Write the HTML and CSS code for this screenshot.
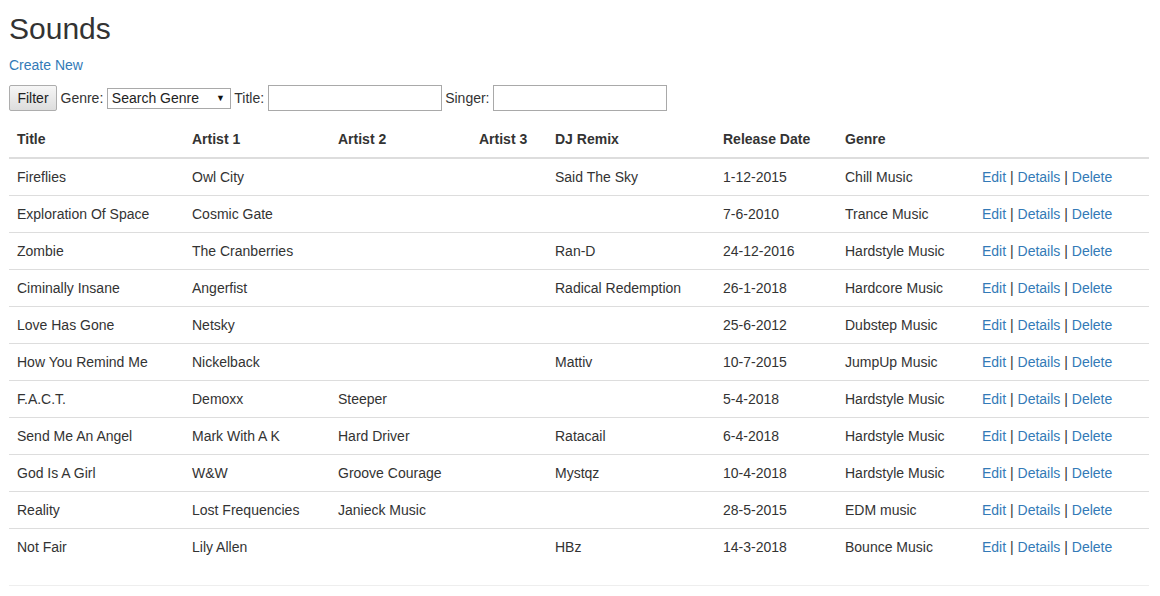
FILE: index.html
```html
<!DOCTYPE html>
<html>
<head>
<meta charset="utf-8">
<title>Sounds</title>
<link rel="stylesheet" href="styles.css">
</head>
<body>
<div class="container">
  <h2 class="title">Sounds</h2>
  <p class="create"><a href="#">Create New</a></p>
  <form class="filter">
    <button type="button" class="btn">Filter</button>
    <span class="lbl">Genre:</span>
    <span class="select-wrap">
      <select class="sel"><option>Search Genre</option></select>
      <span class="arrow">&#9660;</span>
    </span>
    <span class="lbl">Title:</span>
    <input type="text" class="txt">
    <span class="lbl">Singer:</span>
    <input type="text" class="txt">
  </form>
  <table class="table">
    <thead>
      <tr>
        <th class="c-title">Title</th>
        <th class="c-a1">Artist 1</th>
        <th class="c-a2">Artist 2</th>
        <th class="c-a3">Artist 3</th>
        <th class="c-dj">DJ Remix</th>
        <th class="c-date">Release Date</th>
        <th class="c-genre">Genre</th>
        <th class="c-act"></th>
      </tr>
    </thead>
    <tbody>
      <tr><td>Fireflies</td><td>Owl City</td><td></td><td></td><td>Said The Sky</td><td>1-12-2015</td><td>Chill Music</td><td><a href="#">Edit</a> | <a href="#">Details</a> | <a href="#">Delete</a></td></tr>
      <tr><td>Exploration Of Space</td><td>Cosmic Gate</td><td></td><td></td><td></td><td>7-6-2010</td><td>Trance Music</td><td><a href="#">Edit</a> | <a href="#">Details</a> | <a href="#">Delete</a></td></tr>
      <tr><td>Zombie</td><td>The Cranberries</td><td></td><td></td><td>Ran-D</td><td>24-12-2016</td><td>Hardstyle Music</td><td><a href="#">Edit</a> | <a href="#">Details</a> | <a href="#">Delete</a></td></tr>
      <tr><td>Ciminally Insane</td><td>Angerfist</td><td></td><td></td><td>Radical Redemption</td><td>26-1-2018</td><td>Hardcore Music</td><td><a href="#">Edit</a> | <a href="#">Details</a> | <a href="#">Delete</a></td></tr>
      <tr><td>Love Has Gone</td><td>Netsky</td><td></td><td></td><td></td><td>25-6-2012</td><td>Dubstep Music</td><td><a href="#">Edit</a> | <a href="#">Details</a> | <a href="#">Delete</a></td></tr>
      <tr><td>How You Remind Me</td><td>Nickelback</td><td></td><td></td><td>Mattiv</td><td>10-7-2015</td><td>JumpUp Music</td><td><a href="#">Edit</a> | <a href="#">Details</a> | <a href="#">Delete</a></td></tr>
      <tr><td>F.A.C.T.</td><td>Demoxx</td><td>Steeper</td><td></td><td></td><td>5-4-2018</td><td>Hardstyle Music</td><td><a href="#">Edit</a> | <a href="#">Details</a> | <a href="#">Delete</a></td></tr>
      <tr><td>Send Me An Angel</td><td>Mark With A K</td><td>Hard Driver</td><td></td><td>Ratacail</td><td>6-4-2018</td><td>Hardstyle Music</td><td><a href="#">Edit</a> | <a href="#">Details</a> | <a href="#">Delete</a></td></tr>
      <tr><td>God Is A Girl</td><td>W&amp;W</td><td>Groove Courage</td><td></td><td>Mystqz</td><td>10-4-2018</td><td>Hardstyle Music</td><td><a href="#">Edit</a> | <a href="#">Details</a> | <a href="#">Delete</a></td></tr>
      <tr><td>Reality</td><td>Lost Frequencies</td><td>Janieck Music</td><td></td><td></td><td>28-5-2015</td><td>EDM music</td><td><a href="#">Edit</a> | <a href="#">Details</a> | <a href="#">Delete</a></td></tr>
      <tr><td>Not Fair</td><td>Lily Allen</td><td></td><td></td><td>HBz</td><td>14-3-2018</td><td>Bounce Music</td><td><a href="#">Edit</a> | <a href="#">Details</a> | <a href="#">Delete</a></td></tr>
    </tbody>
  </table>
  <hr class="rule">
</div>
</body>
</html>
```

FILE: styles.css
```css
html, body {
  margin: 0;
  padding: 0;
  background: #fff;
}
body {
  font-family: "Liberation Sans", Arial, sans-serif;
  font-size: 14px;
  line-height: 20px;
  color: #333;
}
a {
  color: #337ab7;
  text-decoration: none;
}
.container {
  width: 1140px;
  padding: 0 9px;
}
.title {
  font-size: 30px;
  font-weight: 500;
  line-height: 33px;
  margin: 12px 0 10px;
}
.create {
  margin: 0 0 10px;
}
.filter {
  display: flex;
  align-items: center;
  gap: 3.5px;
  height: 26px;
  margin: 0;
}
.btn {
  font-family: inherit;
  font-size: 14px;
  color: #222;
  width: 48px;
  height: 26px;
  padding: 0;
  border: 1px solid #adadad;
  border-radius: 2px;
  background: linear-gradient(#f6f6f6, #dddddd);
}
.lbl {
  white-space: nowrap;
}
.select-wrap {
  position: relative;
  display: inline-block;
}
.sel {
  appearance: none;
  -webkit-appearance: none;
  font-family: inherit;
  font-size: 14px;
  color: #222;
  width: 124px;
  height: 21px;
  padding: 0 0 0 4px;
  border: 1px solid #a9a9a9;
  border-radius: 0;
  background: #fff;
  display: block;
}
.arrow {
  position: absolute;
  right: 6px;
  top: 4px;
  font-size: 9px;
  line-height: 13px;
  color: #111;
  pointer-events: none;
}
.txt {
  font-family: inherit;
  font-size: 14px;
  width: 174px;
  height: 26px;
  box-sizing: border-box;
  border: 1px solid #a9a9a9;
  padding: 1px 3px;
}
.table {
  width: 1140px;
  border-collapse: collapse;
  border-spacing: 0;
  table-layout: fixed;
  margin: 10px 0 20px;
}
.table th,
.table td {
  padding: 8px;
  text-align: left;
  vertical-align: top;
  line-height: 20px;
  white-space: nowrap;
}
.table th {
  font-weight: bold;
  border-bottom: 2px solid #ddd;
}
.table td {
  border-top: 1px solid #ddd;
}
.table tbody tr:first-child td {
  border-top: 0;
}
.c-title { width: 159px; }
.c-a1 { width: 130px; }
.c-a2 { width: 125px; }
.c-a3 { width: 60px; }
.c-dj { width: 152px; }
.c-date { width: 106px; }
.c-genre { width: 121px; }
.c-act { width: 159px; }
.rule {
  margin: 20px 0;
  border: 0;
  border-top: 1px solid #eee;
  height: 0;
}
```
